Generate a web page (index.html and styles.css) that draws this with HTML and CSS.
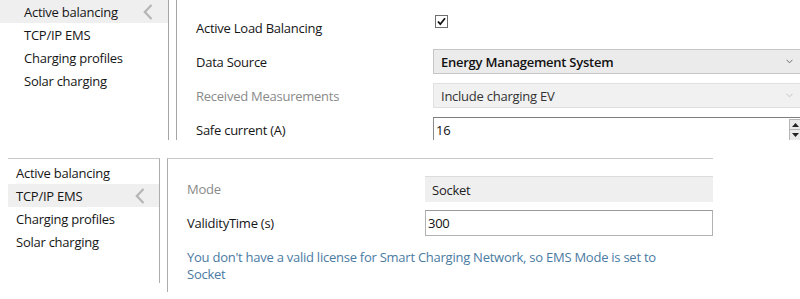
FILE: index.html
```html
<!DOCTYPE html>
<html>
<head>
<meta charset="utf-8">
<link rel="stylesheet" href="styles.css">
</head>
<body>
<div class="screen">
  <section class="panel panel-top">
    <nav class="nav nav-top">
      <div class="nav-item selected"><span>Active balancing</span><svg class="chev" width="10" height="16" viewBox="0 0 10 16"><polyline points="8.5,1 1.8,8 8.5,15" fill="none" stroke="#b5b5b5" stroke-width="2.2"/></svg></div>
      <div class="nav-item"><span>TCP/IP EMS</span></div>
      <div class="nav-item"><span>Charging profiles</span></div>
      <div class="nav-item"><span>Solar charging</span></div>
    </nav>
    <div class="form form-top">
      <div class="row row-check">
        <span class="label">Active Load Balancing</span>
        <span class="checkbox"><svg width="13" height="13" viewBox="0 0 13 13"><rect x="0.5" y="0.5" width="12" height="12" fill="#fff" stroke="#6e6e6e"/><polyline points="3,6.5 5.3,9.2 10,3.3" fill="none" stroke="#111" stroke-width="1.8"/></svg></span>
      </div>
      <div class="row">
        <span class="label">Data Source</span>
        <div class="select strong"><span>Energy Management System</span><svg class="dd" width="7" height="5" viewBox="0 0 7 5"><polyline points="0.5,0.8 3.5,3.8 6.5,0.8" fill="none" stroke="#6b6b6b" stroke-width="1"/></svg></div>
      </div>
      <div class="row">
        <span class="label muted">Received Measurements</span>
        <div class="select disabled"><span>Include charging EV</span><svg class="dd" width="7" height="5" viewBox="0 0 7 5"><polyline points="0.5,0.8 3.5,3.8 6.5,0.8" fill="none" stroke="#c4c4c4" stroke-width="1"/></svg></div>
      </div>
      <div class="row">
        <span class="label">Safe current (A)</span>
        <div class="input input-dark"><span>16</span>
          <div class="spinner">
            <div class="spin-btn"><svg width="7" height="4" viewBox="0 0 7 4"><polygon points="0,4 3.5,0 7,4" fill="#222"/></svg></div>
            <div class="spin-btn"><svg width="7" height="4" viewBox="0 0 7 4"><polygon points="0,0 3.5,4 7,0" fill="#222"/></svg></div>
          </div>
        </div>
      </div>
    </div>
  </section>

  <section class="panel panel-bottom">
    <nav class="nav nav-bottom">
      <div class="nav-item"><span>Active balancing</span></div>
      <div class="nav-item selected"><span>TCP/IP EMS</span><svg class="chev" width="10" height="16" viewBox="0 0 10 16"><polyline points="8.5,1 1.8,8 8.5,15" fill="none" stroke="#b5b5b5" stroke-width="2.2"/></svg></div>
      <div class="nav-item"><span>Charging profiles</span></div>
      <div class="nav-item"><span>Solar charging</span></div>
    </nav>
    <div class="form form-bottom">
      <div class="row">
        <span class="label muted">Mode</span>
        <div class="field-readonly"><span>Socket</span></div>
      </div>
      <div class="row">
        <span class="label">ValidityTime (s)</span>
        <div class="input input-light"><span>300</span></div>
      </div>
      <p class="note">You don't have a valid license for Smart Charging Network, so EMS Mode is set to<br>Socket</p>
    </div>
  </section>
</div>
</body>
</html>
```

FILE: styles.css
```css
* { box-sizing: border-box; }

html, body {
  margin: 0;
  padding: 0;
  background: #ffffff;
}

body {
  font-family: "Open Sans", "Noto Sans", sans-serif;
  font-size: 13px;
  letter-spacing: -0.25px;
  color: #161616;
  overflow: hidden;
}

.screen {
  width: 800px;
  height: 299px;
  overflow: hidden;
}

.panel {
  display: flex;
  align-items: flex-start;
}

.panel-top {
  height: 140px;
  overflow: hidden;
  align-items: stretch;
}

.nav-item {
  height: 23px;
  display: flex;
  align-items: center;
  justify-content: space-between;
  white-space: nowrap;
}

.nav-item.selected {
  background: #efefef;
}

.chev { flex: none; display: block; }

.nav-top {
  flex: none;
  width: 169px;
  border-right: 1px solid #a5a5a5;
}

.nav-top .nav-item {
  padding-left: 24px;
  padding-right: 15px;
}

.form-top {
  flex: none;
  width: 640px;
  margin-left: 7px;
  border-left: 1px solid #a5a5a5;
  padding-left: 19px;
}

.row {
  display: grid;
  align-items: center;
  white-space: nowrap;
}

.form-top .row {
  grid-template-columns: 237px 370px;
  height: 25px;
  margin-top: 9px;
}

.form-top .row:nth-child(2) { margin-top: 8px; }

.form-top .row-check {
  height: 26px;
  margin-top: 15px;
}

.row-check .checkbox {
  align-self: start;
  margin-left: 2px;
  height: 13px;
}

.checkbox svg { display: block; }

.label { line-height: 17px; padding-top: 1px; }
.muted { color: #8a8a8a; }

.select {
  height: 25px;
  display: flex;
  align-items: center;
  justify-content: space-between;
  padding: 0 9px 0 7px;
}

.select.strong {
  background: #ebebeb;
  border: 1px solid #c6c6c6;
  font-weight: 600;
  color: #111;
}

.select.disabled {
  background: #f1f1f1;
  border: 1px solid #e0e0e0;
  color: #333;
}

.dd { display: block; flex: none; }

.input {
  position: relative;
  height: 25px;
  display: flex;
  align-items: center;
  padding-left: 2px;
  background: #fff;
  color: #111;
}

.input-dark {
  border: 1px solid #a8a8a8;
  border-top-color: #7d7d7d;
  border-left-color: #8a8a8a;
}

.spinner {
  position: absolute;
  right: 1px;
  top: 1px;
  width: 12px;
  display: flex;
  flex-direction: column;
}

.spin-btn {
  height: 11px;
  background: #e9e9e9;
  border: 1px solid #b5b5b5;
  display: flex;
  align-items: center;
  justify-content: center;
}

.spin-btn + .spin-btn { border-top: none; }

.spin-btn svg { display: block; }

.panel-bottom {
  margin-top: 18px;
}

.nav-bottom {
  flex: none;
  margin-left: 8px;
  width: 152px;
  height: 125px;
  border-top: 1px solid #cacaca;
  border-right: 1px solid #adadad;
  padding-top: 2px;
}

.nav-bottom .nav-item {
  padding-left: 8px;
  padding-right: 14px;
}

.form-bottom {
  flex: none;
  margin-left: 7px;
  width: 546px;
  height: 134px;
  border-top: 1px solid #cacaca;
  border-left: 1px solid #adadad;
  padding-left: 19px;
  padding-top: 17px;
}

.form-bottom .row {
  grid-template-columns: 238px 288px;
  height: 26px;
}

.form-bottom .row + .row { margin-top: 8px; }

.field-readonly {
  height: 26px;
  display: flex;
  align-items: center;
  padding-left: 7px;
  background: #efefef;
  border-top: 1px solid #dcdcdc;
  color: #222;
}

.input-light {
  height: 26px;
  border: 1px solid #b2b2b2;
  border-top-color: #9a9a9a;
}

.note {
  margin: 13px 0 0 0;
  line-height: 17px;
  color: #4a7ba3;
  white-space: nowrap;
}
```
